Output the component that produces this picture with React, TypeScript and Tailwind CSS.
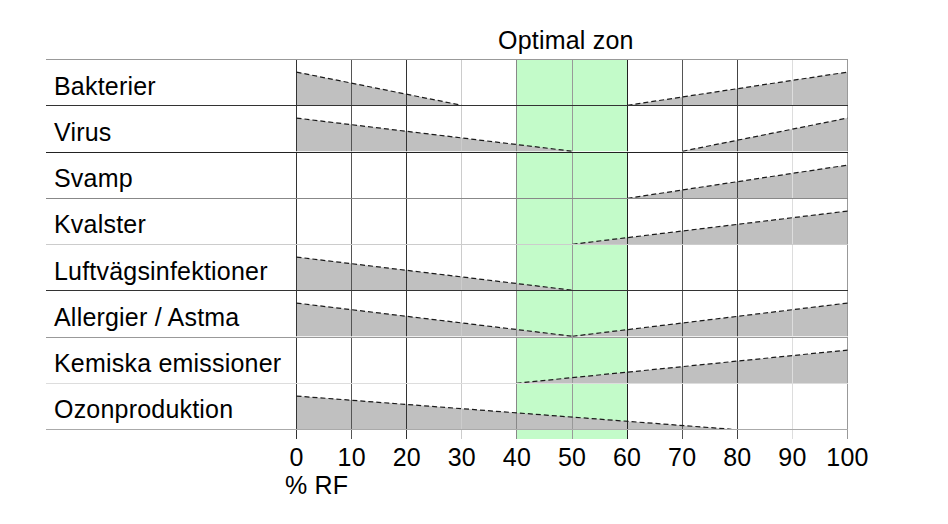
const W = 552;
const H = 45;
const X = (p: number) => Math.round(p * 5.51) + 0.5;
const TOP = 12;

const gridColors = ["#333", "#555", "#333", "#ccc", "#888", "#999", "#222", "#555", "#444", "#ddd", "#999"];

type Slope = { from: number; to: number; dir: "down" | "up" };

const rows: { label: string; line: string; slopes: Slope[] }[] = [
  { label: "Bakterier", line: "border-b-[#333]", slopes: [{ from: 0, to: 30, dir: "down" }, { from: 60, to: 100, dir: "up" }] },
  { label: "Virus", line: "border-b-[#222]", slopes: [{ from: 0, to: 50, dir: "down" }, { from: 70, to: 100, dir: "up" }] },
  { label: "Svamp", line: "border-b-[#888]", slopes: [{ from: 60, to: 100, dir: "up" }] },
  { label: "Kvalster", line: "border-b-[#ccc]", slopes: [{ from: 50, to: 100, dir: "up" }] },
  { label: "Luftvägsinfektioner", line: "border-b-[#333]", slopes: [{ from: 0, to: 50, dir: "down" }] },
  { label: "Allergier / Astma", line: "border-b-[#999]", slopes: [{ from: 0, to: 50, dir: "down" }, { from: 50, to: 100, dir: "up" }] },
  { label: "Kemiska emissioner", line: "border-b-[#ddd]", slopes: [{ from: 40, to: 100, dir: "up" }] },
  { label: "Ozonproduktion", line: "border-b-[#aaa]", slopes: [{ from: 0, to: 79, dir: "down" }] },
];

const ticks = [0, 10, 20, 30, 40, 50, 60, 70, 80, 90, 100];

function Grid({ h }: { h: number }) {
  return (
    <>
      {ticks.map((t, i) => (
        <line key={t} x1={X(t)} x2={X(t)} y1={0} y2={h} stroke={gridColors[i]} strokeWidth={1} />
      ))}
    </>
  );
}

function Zone({ h }: { h: number }) {
  return <rect x={X(40)} y={0} width={X(60) - X(40)} height={h} fill="#c3fbc9" />;
}

function Cell({ slopes }: { slopes: Slope[] }) {
  return (
    <svg viewBox={`0 0 ${W} ${H}`} preserveAspectRatio="none" className="h-full w-[552px] shrink-0">
      <Zone h={H} />
      {slopes.map((s, i) => {
        const a = X(s.from);
        const b = X(s.to);
        const pts = s.dir === "down" ? `${a},${TOP} ${b},${H} ${a},${H}` : `${a},${H} ${b},${TOP} ${b},${H}`;
        return <polygon key={i} points={pts} fill="#c0c0c0" />;
      })}
      <Grid h={H} />
      {slopes.map((s, i) => {
        const a = X(s.from);
        const b = X(s.to);
        return s.dir === "down" ? (
          <line key={i} x1={a} y1={TOP} x2={b} y2={H} stroke="#1a1a1a" strokeWidth={1.2} strokeDasharray="5 3" />
        ) : (
          <line key={i} x1={a} y1={H} x2={b} y2={TOP} stroke="#1a1a1a" strokeWidth={1.2} strokeDasharray="5 3" />
        );
      })}
    </svg>
  );
}

export default function App() {
  return (
    <main className="w-[948px] h-[524px] bg-white text-black font-['Liberation_Sans',Arial,sans-serif] text-[25px] leading-[24px] tracking-[0.2px] pt-[28px] pl-[46px]">
      <div className="h-[24px] mb-[7px] pl-[452px]">Optimal zon</div>

      <div className="flex flex-col w-[802px] border-t border-t-[#999]">
        {rows.map((r) => (
          <div key={r.label} className={`flex h-[46.25px] border-b ${r.line}`}>
            <div className="w-[250px] shrink-0 pl-[8px] pt-[13.5px] whitespace-nowrap">{r.label}</div>
            <Cell slopes={r.slopes} />
          </div>
        ))}
      </div>

      <div className="flex pl-[250px]">
        <svg width={W} height={9} className="shrink-0">
          <Zone h={9} />
          <Grid h={9} />
        </svg>
      </div>

      <div className="flex mt-[6px] ml-[223px]">
        {ticks.map((t) => (
          <span key={t} className="w-[55.1px] shrink-0 text-center">
            {t}
          </span>
        ))}
      </div>

      <div className="mt-[4px] ml-[239px]">% RF</div>
    </main>
  );
}
